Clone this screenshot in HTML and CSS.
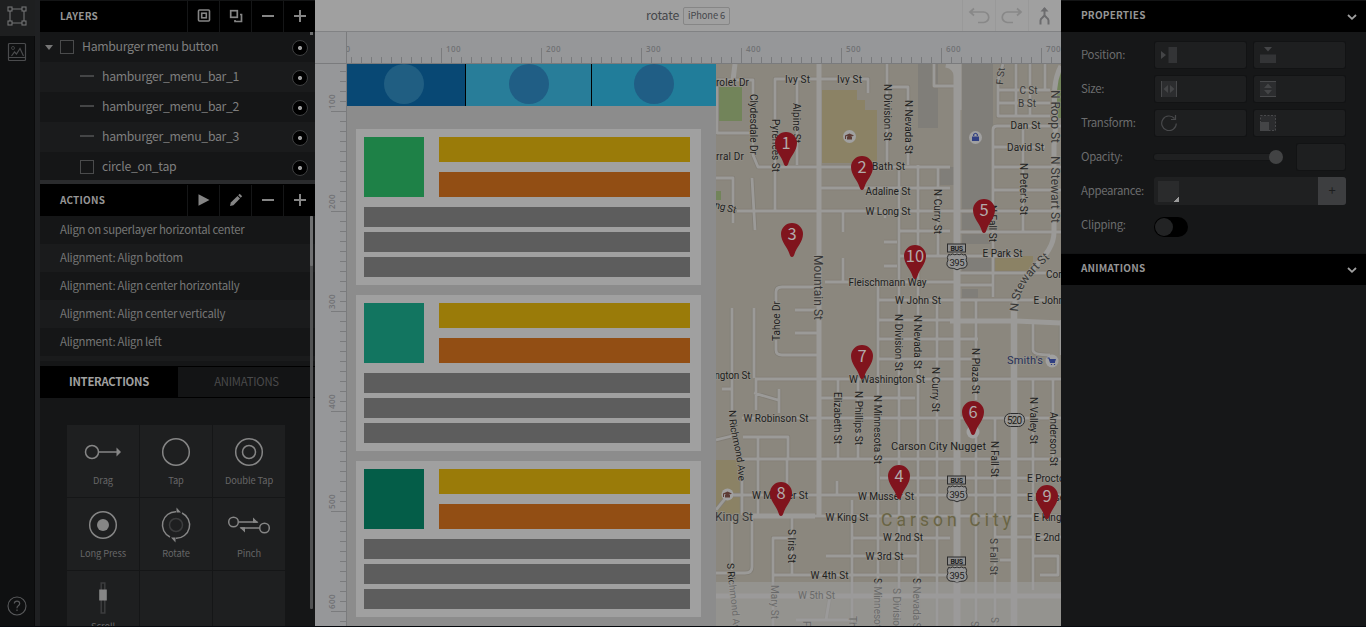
FILE: index.html
```
<!DOCTYPE html>
<html lang="en">
<head>
<meta charset="utf-8">
<title>rotate</title>
<link rel="stylesheet" href="styles.css">
</head>
<body>
<div class="app">
  <nav class="rail">
    <div class="rail-item active"><svg width="20" height="20" viewBox="0 0 20 20"><g fill="none" stroke="#737475" stroke-width="1.1"><path d="M5 3h10M5 17h10M3 5v10M17 5v10"/><rect x="1" y="1" width="4" height="4"/><rect x="15" y="1" width="4" height="4"/><rect x="1" y="15" width="4" height="4"/><rect x="15" y="15" width="4" height="4"/></g></svg></div>
    <div class="rail-item"><svg width="20" height="20" viewBox="0 0 20 20"><g fill="none" stroke="#4a4b4d" stroke-width="1.2"><rect x="1.5" y="1.500" width="17" height="17" rx="1"/><path d="M2 15.500h16M4.500 14l3-4 2 2 3.500-5.500 3.500 7.500"/><circle cx="6" cy="6" r="1.500" stroke-width=".8"/></g></svg></div>
    <div class="help"><svg width="20" height="20" viewBox="0 0 20 20"><circle cx="10" cy="10" r="9" fill="none" stroke="#58595b" stroke-width="1.100"/><path d="M7.300 7.600Q7.400 5.200 10 5.200t2.700 2.400q0 1.200-1.400 2.100T10 12.200M10 13.600v1.300" fill="none" stroke="#58595b" stroke-width="1.200"/></svg></div>
  </nav>

  <aside class="left">
    <header class="head"><h2>LAYERS</h2>
      <span class="btn"><svg width="14" height="14"><g fill="none" stroke="#858585" stroke-width="1.600"><rect x="1.500" y="1" width="11" height="11" rx="1"/><rect x="4.700" y="4.200" width="4.600" height="4.600"/></g></svg></span>
      <span class="btn"><svg width="14" height="14"><g fill="none" stroke="#858585" stroke-width="1.700"><rect x="1.700" y="1.700" width="6.600" height="6.600"/><path d="M11 5.500h1.500v7H6V11"/></g></svg></span>
      <span class="btn"><svg width="14" height="14"><path d="M1 7h12" stroke="#858585" stroke-width="2"/></svg></span>
      <span class="btn"><svg width="14" height="14"><path d="M1 7h12M7 1v12" stroke="#858585" stroke-width="2"/></svg></span>
    </header>
    <div class="layers">
      <div class="layer"><i class="tri"></i><i class="box"></i><span>Hamburger menu button</span><i class="eye"></i></div>
      <div class="layer sub"><i class="dash"></i><span>hamburger_menu_bar_1</span><i class="eye"></i></div>
      <div class="layer sub"><i class="dash"></i><span>hamburger_menu_bar_2</span><i class="eye"></i></div>
      <div class="layer sub"><i class="dash"></i><span>hamburger_menu_bar_3</span><i class="eye"></i></div>
      <div class="layer sub"><i class="box"></i><span>circle_on_tap</span><i class="eye"></i></div>
      <i class="thumb-small"></i>
    </div>
    <header class="head second"><h2>ACTIONS</h2>
      <span class="btn"><svg width="14" height="14"><path d="M1.500 1.200 12.500 7 1.500 12.800z" fill="#858585"/></svg></span>
      <span class="btn"><svg width="14" height="14"><g fill="#858585"><path d="M1 13l.8-3.400L8.500 3 11 5.500 4.400 12.200z"/><path d="M9.200 2.300 10.700.8 13.200 3.300 11.700 4.800z"/></g></svg></span>
      <span class="btn"><svg width="14" height="14"><path d="M1 7h12" stroke="#858585" stroke-width="2"/></svg></span>
      <span class="btn"><svg width="14" height="14"><path d="M1 7h12M7 1v12" stroke="#858585" stroke-width="2"/></svg></span>
    </header>
    <div class="actions">
      <div>Align on superlayer horizontal center</div>
      <div>Alignment: Align bottom</div>
      <div>Alignment: Align center horizontally</div>
      <div>Alignment: Align center vertically</div>
      <div>Alignment: Align left</div>
      <div></div>
    </div>
    <div class="tabs"><span class="on">INTERACTIONS</span><span>ANIMATIONS</span></div>
    <div class="gestures">
      <div class="cell"><svg width="44" height="36" viewBox="-22 -18 44 36"><circle cx="-11" r="6.500"/><path d="M-4 0H14"/><path class="f" d="M13.500-4.500 18 0 13.500 4.500z"/></svg><b>Drag</b></div>
      <div class="cell"><svg width="44" height="36" viewBox="-22 -18 44 36"><circle r="13.300"/></svg><b>Tap</b></div>
      <div class="cell"><svg width="44" height="36" viewBox="-22 -18 44 36"><circle r="13.300"/><circle r="6.500"/></svg><b>Double Tap</b></div>
      <div class="cell"><svg width="44" height="36" viewBox="-22 -18 44 36"><circle r="13.300"/><circle class="f" r="6"/></svg><b>Long Press</b></div>
      <div class="cell"><svg width="44" height="36" viewBox="-22 -18 44 36"><circle r="6.500" stroke="#3c3d3e"/><path d="M0-13.300A13.300 13.300 0 0 0-6 12M0 13.300A13.300 13.300 0 0 0 6-12"/><path class="f" d="M.5-17.500 5-12.500H.5zM-.5 17.500-5 12.500H-.5z"/></svg><b>Rotate</b></div>
      <div class="cell"><svg width="44" height="36" viewBox="-22 -18 44 36"><circle cx="-15.500" cy="-3" r="4.800"/><circle cx="15.500" cy="3" r="4.800"/><path d="M-10.500-3H8.500M10.500 3H-8.500"/><path class="f" d="M4-7.500 9.500-2.300H4zM-4 7.500-9.500 2.300H-4z"/></svg><b>Pinch</b></div>
      <div class="cell"><svg width="44" height="36" viewBox="-22 -18 44 36"><rect x="-1.800" y="-15" width="3.600" height="30" stroke="#3c3d3e"/><rect class="f" x="-3.800" y="-8.500" width="7.600" height="11"/></svg><b>Scroll</b></div>
      <div class="cell"></div>
      <div class="cell"></div>
    </div>
    <i class="scroll"></i><i class="scroll-thumb"></i>
  </aside>

  <main class="stage">
    <div class="toolbar">
      <div class="title"><span>rotate</span><em>iPhone 6</em></div>
      <span class="tool"><svg width="22" height="20"><path d="M2 6h13.500a4.500 4.500 0 0 1 0 10.500H10M6 2.500 2 6l4 3.500" fill="none" stroke="#888" stroke-width="1.700"/></svg></span>
      <span class="tool"><svg width="22" height="20"><path d="M20 6H6.500a4.500 4.500 0 0 0 0 10.500H12M16 2.500 20 6l-4 3.500" fill="none" stroke="#888" stroke-width="1.700"/></svg></span>
      <span class="tool"><svg width="22" height="20"><path d="M10.500 2v7M6.500 18.500v-4q0-1.500 2-3l2-2 2 2q2 1.500 2 3v4" fill="none" stroke="#6c6c6e" stroke-width="2"/><path d="M10.500 1l4 4.500h-8z" fill="#6c6c6e"/></svg></span>
    </div>
    <div class="work">
      <div class="corner"></div>
      <svg class="hruler" width="714" height="32" viewBox="347 32 714 32">
        <defs><pattern id="ht" x="351" y="32" width="10" height="32" patternUnits="userSpaceOnUse"><rect y="25" width="1" height="6" fill="#7a7b7d"/></pattern></defs>
        <rect x="347" y="32" width="714" height="31" fill="url(#ht)"/>
        <path d="M441.500 48v15M541.500 48v15M641.500 48v15M741.500 48v15M841.500 48v15M941.500 48v15M1041.500 48v15M347 63.500h714" stroke="#7a7b7d"/>
        <g class="num"><text x="345.500" y="52">0</text><text x="446" y="52">100</text><text x="546" y="52">200</text><text x="646" y="52">300</text><text x="746" y="52">400</text><text x="846" y="52">500</text><text x="946" y="52">600</text><text x="1046" y="52">700</text></g>
      </svg>
      <svg class="vruler" width="32" height="562" viewBox="315 64 32 562">
        <defs><pattern id="vt" x="315" y="71" width="32" height="10" patternUnits="userSpaceOnUse"><rect x="25" width="6" height="1" fill="#7a7b7d"/></pattern></defs>
        <rect x="315" y="64" width="32" height="562" fill="url(#vt)"/>
        <path d="M331 111.500h15M331 211.500h15M331 311.500h15M331 411.500h15M331 511.500h15M331 611.500h15M346.500 64v562" stroke="#7a7b7d"/>
        <g class="num"><text transform="translate(335 109) rotate(-90)">100</text><text transform="translate(335 209) rotate(-90)">200</text><text transform="translate(335 309) rotate(-90)">300</text><text transform="translate(335 409) rotate(-90)">400</text><text transform="translate(335 509) rotate(-90)">500</text><text transform="translate(335 609) rotate(-90)">600</text></g>
      </svg>
      <section class="artboard">
        <div class="segments"><div class="seg a"><i></i></div><div class="seg b"><i></i></div><div class="seg c"><i></i></div></div>
        <div class="cards">
          <div class="card"><div class="top"><i class="sq green"></i><div class="bars"><i class="y"></i><i class="o"></i></div></div><i class="g"></i><i class="g"></i><i class="g"></i></div>
          <div class="card"><div class="top"><i class="sq teal"></i><div class="bars"><i class="y"></i><i class="o"></i></div></div><i class="g"></i><i class="g"></i><i class="g"></i></div>
          <div class="card"><div class="top"><i class="sq deep"></i><div class="bars"><i class="y"></i><i class="o"></i></div></div><i class="g"></i><i class="g"></i><i class="g"></i></div>
        </div>
      </section>
      <svg class="map" width="345" height="562" viewBox="716 64 345 562">
        <defs>
          <g id="pin"><path d="M0 0C-1.600 0-2-1.500-2.500-3-4.500-10-11-15-11-23A11 11 0 0 1 11-23C11-15 4.500-10 2.500-3 2-1.500 1.600 0 0 0z" fill="#80141d"/></g>
          <g id="bus"><rect x="-9.500" y="-18" width="18" height="8" fill="#8f8f8f" stroke="#2c2c2c"/><text x="-6.500" y="-11.300" font-size="7" font-weight="700" textLength="12.500">BUS</text><path d="M-8.500-7.500q2 1 4-.500Q-2-6.500 0-8 2-6.500 4.500-8q2 1.500 4 .500 2 3 .500 5.500 3 6-2 8-4 0-7 1.800-3-1.800-7-1.800-5-2-2-8Q-10.500-4.500-8.500-7.500z" fill="#959595" stroke="#2c2c2c"/><text x="-7.500" y="4" font-size="9.500" textLength="15">395</text></g>
          <path id="rich" d="M729 410C729 438 738 448 738.500 482"/>
          <path id="stew" d="M1018 312C1019 291 1026 279 1049 259L1060 250"/>
          <path id="srich" d="M727 563C728 590 733 600 733 640"/>
          <path id="streets" d="M717 80H753V155L758 167H950M775 210V79H868V93M797 79V165M887 64V165M887 87H908V165M934 64V86H955M717 87V133H754M1003 64 998 80V116H1050M998 90H1050M998 103H1050M1016 64V116M1030 64V116M1045 64V90M993 297V130Q993 126 997 126H1061M993 147H1045M820 188H950M737 211H1061M716 178H733V223M752 178 755 230M843 211V232M885 211V218M899 165V626M918 165V626M938 167V255M899 231H950M960 232H1061M993 167H1061M993 190H1061M1023 126V232M884 242H897M884 266H897M899 167V282M899 256H1020M960 273H1061M960 285H993M825 282H957M843 258V282M776 302V292Q776 287 782 287H819M878 300H1061M878 282V626M732 308V410M754 308V378M776 340V350Q776 355 782 355H819M795 310H819M795 333H819M755 379H1061M878 320H950M878 339H978M878 359H978M976 300V400M820 398H915M742 418H1061M740 459H1061M743 437H788V460M758 437V515M838 379V460M858 379V460M937 300V626M754 393 778 400M779 389V413M756 379V410M722 389H732M1033 323V350Q1033 355 1050 355M1061 320V355M995 418V626M1033 379V590M1053 379V459M728 495H1061M742 480V515M787 460V495M837 481V495M853 538H950M826 556H918M773 626V538H793M773 575H950M792 515V575M732 515V570M752 515V567Q752 573 745 573H716M852 500V626M815 516H1061M995 537H1061M1000 560H1013M1033 556H1058V575H1040M880 478H1061M976 418V626M796 620H850M830 596 826 620M716 440 732 436M716 510 728 495"/>
        </defs>
        <rect x="716" y="64" width="345" height="562" fill="#8b877e"/>
        <path d="M718 87h24v34h-24zM716 191h5v9h-5zM1057 70h4v48h-4z" fill="#72845a"/>
        <path d="M822 90h35v10h8v10h12v53h-55zM995 256h38v15h-38zM716 460h24v54h-24z" fill="#8b8265"/>
        <path d="M918 64h20v64h-20zM962 64h31v180h-31zM940 167h14v18h-14zM962 256h32v16h-32zM962 289h16v10h-16z" fill="#807e79"/>
        <use href="#streets" class="casing"/>
        <use href="#streets" class="minor"/>
        <path class="major" d="M735 64 733 80M819 64V515M753 516H815M950 321H1014L1061 323M1061 66C1048 90 1059 120 1054 145V232C1054 262 1014 270 1014 312M716 596H1061" stroke-width="5"/>
        <path class="major" d="M946 64Q957 66 957 76V626M958 64V110" stroke-width="7"/>
        <path class="major" d="M1014 305V626" stroke-width="6.500"/>

        <g class="lbl">
          <text x="716" y="86" textLength="33">rolet Dr</text><text x="785" y="83" textLength="25">Ivy St</text><text x="837" y="83" textLength="25">Ivy St</text>
          <text x="1019.500" y="94" textLength="18" class="q">C St</text><text x="1018" y="107" textLength="18" class="q">B St</text><text x="1010.500" y="129" textLength="30">Dan St</text><text x="1007" y="151" textLength="37">David St</text>
          <text x="716" y="160" textLength="28">rral Dr</text><text x="872" y="170" textLength="33">Bath St</text><text x="865.500" y="195" textLength="45">Adaline St</text><text x="865.500" y="215" textLength="45">W Long St</text>
          <text transform="translate(714 208) rotate(14)" textLength="22">ng St</text>
          <text x="982.500" y="257" textLength="40">E Park St</text><text x="848.500" y="285.500" textLength="78">Fleischmann Way</text><text x="895" y="304" textLength="46">W John St</text><text x="1033.500" y="304">E John St</text><text x="1046" y="278">Corbett St</text>
          <text x="1007" y="364" textLength="36" font-size="11" fill="#27305a">Smith's</text>
          <text x="849" y="383" textLength="76">W Washington St</text><text x="714.500" y="379" textLength="36">ngton St</text><text x="743.500" y="421.500" textLength="65">W Robinson St</text>
          <text x="891" y="450" textLength="95" font-size="11">Carson City Nugget</text>
          <text x="752" y="499" textLength="56">W Musser St</text><text x="858" y="500" textLength="56">W Musser St</text><text x="1027" y="482">E Proctor St</text><text x="1027" y="501">E Musser St</text><text x="1033.500" y="521">E King St</text><text x="1035" y="541">E 2nd St</text>
          <text x="715" y="521" textLength="38" font-size="12" class="q">King St</text><text x="825.500" y="521" textLength="43">W King St</text>
          <text x="883" y="541" textLength="40">W 2nd St</text><text x="865.500" y="560" textLength="38">W 3rd St</text><text x="810.500" y="579" textLength="38">W 4th St</text><text x="798" y="599" textLength="37">W 5th St</text>
          <text x="881" y="526" textLength="130" font-size="17.500" class="city">Carson City</text>

          <text transform="translate(750 94) rotate(90)" textLength="61">Clydesdale Dr</text><text transform="translate(771.500 119) rotate(90)" textLength="53">Pyrenees St</text><text transform="translate(793 103) rotate(90)" textLength="40">Alpine St</text>
          <text transform="translate(883.500 84) rotate(90)" textLength="57">N Division St</text><text transform="translate(904.500 100) rotate(90)" textLength="54">N Nevada St</text><text transform="translate(1003 85) rotate(-84)" textLength="17" class="q">F St</text>
          <text transform="translate(1051 90) rotate(90)" textLength="53" font-size="12" class="q">N Roop St</text><text transform="translate(1020 163) rotate(90)" textLength="52">N Peter's St</text><text transform="translate(1051 156) rotate(90)" textLength="67" font-size="12" class="q">N Stewart St</text>
          <text transform="translate(934 189) rotate(90)" textLength="45">N Curry St</text><text transform="translate(989 205) rotate(90)" textLength="37">N Fall St</text><text transform="translate(814 255) rotate(90)" textLength="65" font-size="12" class="q">Mountain St</text>
          <text transform="translate(779.500 341) rotate(-90)" textLength="40">Tahoe Dr</text><text transform="translate(894.500 314) rotate(90)" textLength="57">N Division St</text><text transform="translate(913.500 315) rotate(90)" textLength="54">N Nevada St</text><text transform="translate(932 367) rotate(90)" textLength="45">N Curry St</text><text transform="translate(972 348) rotate(90)" textLength="46">N Plaza St</text>
          <text transform="translate(834 392) rotate(90)" textLength="52">Elizabeth St</text><text transform="translate(854.500 391) rotate(90)" textLength="54">N Phillips St</text><text transform="translate(874 395) rotate(90)" textLength="69">N Minnesota St</text><text transform="translate(1030 397) rotate(90)" textLength="47">N Valley St</text><text transform="translate(1049.500 412) rotate(90)" textLength="54">Anderson St</text><text transform="translate(991 441) rotate(90)" textLength="36">N Fall St</text>
          <text textLength="72"><textPath href="#rich">N Richmond Ave</textPath></text><text font-size="12" class="q"><textPath href="#stew" textLength="65">N Stewart St</textPath></text>
          <text transform="translate(788 529) rotate(90)" textLength="34">S Iris St</text><text transform="translate(989.500 538) rotate(90)" textLength="37" class="q">S Fall St</text><text><textPath href="#srich">S Richmond Ave</textPath></text>
          <text transform="translate(770.500 585) rotate(90)" textLength="34">Mary St</text><text transform="translate(848.500 616) rotate(90)">Thompson</text><text transform="translate(874 578) rotate(90)">S Minnesota St</text><text transform="translate(893 588) rotate(90)">S Division St</text><text transform="translate(912.500 578) rotate(90)">S Nevada St</text><text transform="translate(803 621) rotate(90)">F</text><text transform="translate(971 621) rotate(90)">S</text><text transform="translate(990.500 617) rotate(90)">S</text>
          <use href="#bus" x="957" y="262"/><use href="#bus" x="957" y="494"/><use href="#bus" x="957" y="575"/>
          <rect x="1004.500" y="413.500" width="20" height="13" rx="6" fill="#989898" stroke="#2c2c2c"/><text x="1007" y="424" textLength="15">520</text>
        </g>
        <g fill="#a0a0a0"><circle cx="849.500" cy="136.500" r="6.500"/><circle cx="975.500" cy="137.500" r="6.500"/><circle cx="1052" cy="361" r="6.500"/><circle cx="727.500" cy="494.500" r="6"/><circle cx="973" cy="432" r="6.500"/></g>
        <path d="M845 135.500l4.500-2 4.500 2-4.500 2zM847 137h5v2.500h-5zM845 135.500h1v3.500h-1zM723 493.500l4.500-2 4.500 2-4.500 2zM725 495h5v2.500h-5zM723 493.500h1v3.500h-1z" fill="#5c3b35"/>
        <path d="M972 136.500h7v4.500h-7z" fill="#303f82"/><path d="M973.700 136v-1.500q1.800-2.500 3.600 0V136" fill="none" stroke="#303f82" stroke-width="1.200"/>
        <path d="M1047.500 358h1.500l1.500 4.500h4.500M1051.500 364v1M1054.500 364v1" fill="none" stroke="#303f82" stroke-width="1.200"/><path d="M1049.500 359h6.500l-1 3h-4.500z" fill="#303f82"/>
        <rect x="716" y="582" width="345" height="44" fill="#9b9b9b" opacity=".6"/>
        <g class="pins">
          <use href="#pin" x="786" y="166"/><use href="#pin" x="862" y="190"/><use href="#pin" x="792" y="257"/><use href="#pin" x="915" y="279"/><use href="#pin" x="984" y="233"/><use href="#pin" x="862" y="379"/><use href="#pin" x="973" y="435"/><use href="#pin" x="781" y="516"/><use href="#pin" x="899" y="499"/><use href="#pin" x="1047" y="519"/>
          <text x="786" y="149">1</text><text x="862" y="173">2</text><text x="792" y="240">3</text><text x="915" y="262">10</text><text x="984" y="216">5</text><text x="862" y="362">7</text><text x="973" y="418">6</text><text x="781" y="499">8</text><text x="899" y="482">4</text><text x="1047" y="502">9</text>
        </g>
      </svg>
    </div>
  </main>

  <aside class="right">
    <header class="head"><h2>PROPERTIES</h2><svg width="10" height="8"><path d="M1 2l4 3.800L9 2" fill="none" stroke="#a0a0a0" stroke-width="1.800"/></svg></header>
    <div class="props">
      <div class="row"><label>Position:</label>
        <div class="field"><svg width="16" height="16"><path d="M0 4l5 4-5 4z" fill="#444547"/><rect x="7.500" width="8.500" height="16" fill="#333436"/></svg></div>
        <div class="field"><svg width="16" height="16"><path d="M4 0h8L8 4.500z" fill="#444547"/><rect y="7.500" width="16" height="8.500" fill="#333436"/></svg></div></div>
      <div class="row"><label>Size:</label>
        <div class="field"><svg width="16" height="16"><rect width="16" height="16" fill="#2c2d2f"/><path d="M.5 0v16M15.500 0v16" stroke="#48494b"/><path d="M7 4v8L2.500 8zM9 4v8l4.500-4z" fill="#444547"/></svg></div>
        <div class="field"><svg width="16" height="16"><rect width="16" height="16" fill="#2c2d2f"/><path d="M0 .5h16M0 15.500h16" stroke="#48494b"/><path d="M4 7h8L8 2.500zM4 9h8l-4 4.500z" fill="#444547"/></svg></div></div>
      <div class="row"><label>Transform:</label>
        <div class="field"><svg width="16" height="16"><path d="M13.500 3.500A7.300 7.300 0 1 0 15.300 8.500M14.500 0v4.500H10" fill="none" stroke="#48494b" stroke-width="1.200"/></svg></div>
        <div class="field"><svg width="16" height="16"><rect x=".5" y=".5" width="15" height="15" fill="#2b2c2e" stroke="#48494b" stroke-dasharray="2 1.500"/><rect y="7" width="9" height="9" fill="#444547"/></svg></div></div>
      <div class="row"><label>Opacity:</label><div class="slider"><i></i></div><div class="field small"></div></div>
      <div class="row"><label>Appearance:</label><div class="appearance"><i class="swatch"></i><b>+</b></div></div>
      <div class="row"><label>Clipping:</label><div class="toggle"><i></i></div></div>
    </div>
    <header class="head"><h2>ANIMATIONS</h2><svg width="10" height="8"><path d="M1 2l4 3.800L9 2" fill="none" stroke="#a0a0a0" stroke-width="1.800"/></svg></header>
  </aside>
</div>
</body>
</html>
```
FILE: styles.css
```
* { box-sizing: border-box; }
body { margin: 0; background: #05080d; overflow: hidden; font-family: "Noto Sans CJK SC", "Noto Sans", sans-serif; }
i, em { font-style: normal; display: block; }
svg { display: block; flex: none; }
.app { display: flex; width: 1366px; height: 626px; overflow: hidden; }

.rail { width: 40px; flex: none; display: flex; flex-direction: column; background: #0f1011; border-right: 5px solid #1f2022; box-shadow: inset -1px 0 #0a0a0b; }
.rail-item { height: 36px; display: flex; align-items: center; justify-content: center; padding: 0 1px 4px 0; }
.rail-item.active { background: #1e1f20; }
.help { margin-top: auto; padding: 0 0 10px 7px; }

.left { position: relative; width: 275px; flex: none; height: 626px; overflow: hidden; background: #151617; }
.head { display: flex; align-items: center; height: 32px; background: #000; border-top: 1px solid #131415; padding-left: 20px; }
.head h2 { flex: 1; margin: -1px 0 0; font-size: 10px; line-height: 16px; font-weight: 700; letter-spacing: .2px; color: #959595; }
.btn { width: 32px; height: 31px; border-left: 1px solid #151617; display: flex; align-items: center; justify-content: center; padding-bottom: 1px; }
.layers { position: relative; height: 152px; overflow: hidden; border-bottom: 4px solid #2a2b2d; }
.layer { height: 30px; display: flex; align-items: center; padding: 0 7px 0 5px; font-size: 12.300px; letter-spacing: -.32px; line-height: 20px; color: #7e7e7e; }
.layer span { flex: 1; margin-top: -2px; }
.layer:nth-child(even) { background: #1a1b1c; }
.layer.sub { padding-left: 40px; }
.tri { border: 4px solid transparent; border-top: 5px solid #767676; border-bottom: 0; margin: 0 7px 0 0; }
.box { width: 14px; height: 14px; border: 1px solid #4a4b4c; margin-right: 8px; }
.dash { width: 14px; height: 2px; background: #444546; margin: -2px 8px 0 0; }
.eye { width: 16px; height: 16px; border: 1px solid #3c3d3e; border-radius: 50%; background: radial-gradient(circle, #9a9a9a 1.7px, #000 2.400px); margin-top: 2px; }
.thumb-small { position: absolute; right: 2px; top: 0; width: 3px; height: 3px; background: #6d6e6f; }
.second { border-top: 0; }
.actions { height: 150px; overflow: hidden; border-bottom: 5px solid #151617; }
.actions div { height: 28px; padding-left: 20px; font-size: 11.400px; letter-spacing: -.28px; line-height: 27px; color: #767676; }
.actions div:nth-child(even) { background: #1a1b1c; }
.tabs { display: flex; height: 32px; background: #000; padding: 1px 0; font-size: 11.300px; letter-spacing: -.25px; line-height: 29px; text-align: center; color: #4a4a4b; }
.tabs span { flex: 1; background: #131415; }
.tabs .on { flex: 0 0 138px; background: #000; color: #a0a0a0; font-weight: 700; }
.gestures { display: grid; grid-template-columns: repeat(3, 72px); grid-auto-rows: 72px; gap: 1px; margin: 27px 0 0 27px; }
.cell { background: #1e1f20; padding-top: 9px; display: flex; flex-direction: column; align-items: center; }
.cell svg { fill: none; stroke: #868686; stroke-width: 1.5px; }
.cell .f { fill: #868686; stroke: none; }
.cell b { font-weight: 400; font-size: 9.300px; letter-spacing: -.1px; line-height: 14px; margin-top: 3px; color: #666667; }
.scroll, .scroll-thumb { position: absolute; left: 270px; width: 3px; top: 216px; border-radius: 1px; }
.scroll { height: 393px; background: #515253; }
.scroll-thumb { height: 50px; background: #707172; }

.stage { width: 746px; flex: none; background: #989898; }
.toolbar { height: 32px; display: flex; background: #a0a0a0; border-bottom: 1px solid #818284; }
.title { flex: 1; display: flex; align-items: center; gap: 5px; padding-left: 331px; color: #45474b; font-size: 12.300px; letter-spacing: -.2px; line-height: 18px; }
.title span { width: 32px; margin-top: -1px; }
.title em { width: 47px; border: 1px solid #868686; border-radius: 2px; height: 18px; text-align: center; font-size: 9.300px; letter-spacing: -.1px; line-height: 15px; }
.tool { width: 33px; border-left: 1px solid #999; display: flex; align-items: center; justify-content: center; }
.work { display: grid; grid-template-columns: 32px 369px 345px; grid-template-rows: 32px 562px; height: 594px; overflow: hidden; }
.corner { background: #969799; border-right: 1px solid #7a7b7d; border-bottom: 1px solid #7a7b7d; }
.hruler, .vruler { background: #969799; }
.hruler { grid-column: 2 / 4; }
.num { font: 600 8px "Open Sans", "DejaVu Sans", sans-serif; fill: #707174; letter-spacing: .4px; }
.artboard { background: #8c8c8c; overflow: hidden; }
.segments { display: flex; height: 42px; }
.seg { display: flex; justify-content: center; border-right: 1px solid #000; }
.seg i { width: 40px; height: 40px; border-radius: 50%; background: #205e85; }
.a { width: 119px; background: #084874; padding-right: 4px; }
.b { width: 126px; background: #287d99; }
.c { width: 124px; background: #217d9a; border: 0; }
.a i { background: #205e82; }
.cards { display: grid; gap: 10px; padding: 23px 15px 0 9px; }
.card { height: 156px; padding: 8px 11px 8px 8px; background: #a0a0a0; display: flex; flex-direction: column; gap: 5px; }
.top { display: flex; gap: 15px; margin-bottom: 5px; }
.sq { width: 60px; height: 60px; }
.bars { flex: 1; display: grid; gap: 10px; }
.green { background: #1e8147; }
.teal { background: #127560; }
.deep { background: #045d48; }
.y { background: #9a7b09; }
.o { background: #924e14; }
.g { height: 20px; background: #5d5d5d; }

.map { font-family: Roboto, sans-serif; }
.minor, .major, .casing { fill: none; stroke: #9b9a98; stroke-linejoin: round; }
.minor { stroke-width: 2.800px; }
.casing { stroke: #827e76; stroke-width: 4.400px; }
.lbl { font-size: 10px; fill: #202020; }
.lbl > text { paint-order: stroke; stroke: #949189; stroke-width: 1.300px; }
.lbl .q { fill: #383838; }
.lbl .city { fill: #696446; stroke: #8f8b7c; }
.pins text { fill: #b2aaaa; font: 16.500px "Noto Sans CJK SC", sans-serif; text-anchor: middle; }

.right { width: 305px; flex: none; background: #161718; }
.right .head { padding-right: 9px; }
.right .head h2 { margin-top: -3px; }
.props { height: 221px; padding: 10px 20px 0 20px; display: flex; flex-direction: column; gap: 8px; }
.row { display: flex; height: 26px; align-items: center; }
.row label { width: 74px; flex: none; font-size: 11.400px; letter-spacing: -.3px; line-height: 18px; color: #6b6c6d; margin-bottom: 2px; white-space: nowrap; }
.field { width: 91px; height: 26px; background: #1e1f20; border-radius: 2px; box-shadow: 0 0 0 1px #121314; padding: 5px 6px; }
.field + .field { margin-left: 8px; }
.slider { width: 122px; height: 6px; border-radius: 3px; background: #1f2021; display: flex; align-items: center; justify-content: flex-end; margin-left: -1px; box-shadow: 0 0 0 1px #131415; }
.slider i { width: 14px; height: 14px; margin-right: -7px; border-radius: 50%; background: #424344; }
.field.small { width: 48px; margin-left: 21px; }
.appearance { width: 192px; height: 28px; margin-left: -1px; background: #1f2021; border-radius: 3px; display: flex; justify-content: space-between; overflow: hidden; flex: none; }
.swatch { width: 21px; height: 21px; margin: 4px; background: linear-gradient(135deg, #2a2b2c 86%, #9a9a9a 87%); }
.appearance b { width: 28px; background: #3d3e40; color: #1c1d1e; text-align: center; font-weight: 400; font-size: 13px; line-height: 26px; }
.toggle { width: 34px; height: 20px; margin: 3px 0 0 -1px; background: #000; border-radius: 10px; padding: 1px; }
.toggle i { width: 18px; height: 18px; border-radius: 50%; background: #222324; }
```
